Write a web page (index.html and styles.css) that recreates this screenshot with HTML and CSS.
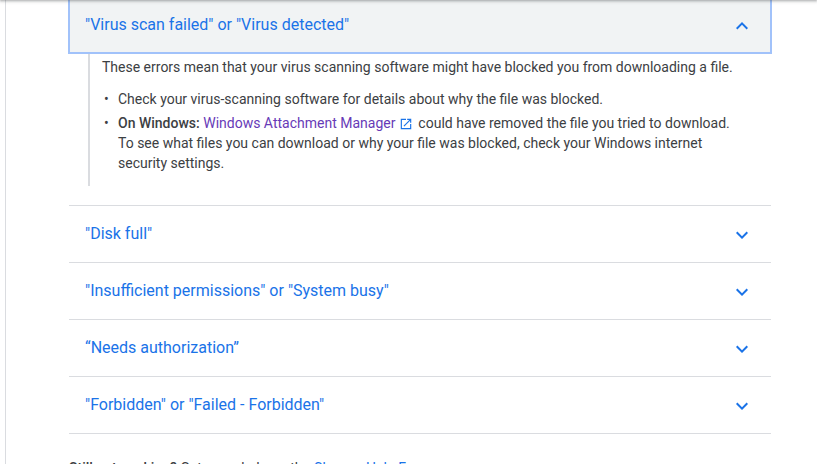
FILE: index.html
```html
<!DOCTYPE html>
<html lang="en">
<head>
    <meta charset="UTF-8">
    <meta name="viewport" content="width=device-width, initial-scale=1.0">
    <title>Fix file download errors</title>
    <link rel="stylesheet" href="styles.css">
</head>
<body>
    <header class="top-bar"></header>

    <main class="article">
        <section class="item">
            <button class="item-toggle open" type="button" aria-expanded="true" aria-controls="virus">
                <span>"Virus scan failed" or "Virus detected"</span>
                <svg class="chevron" viewBox="0 0 24 24" aria-hidden="true"><path d="M12 8l-6 6 1.41 1.41L12 10.83l4.59 4.58L18 14z"/></svg>
            </button>
            <div class="item-content" id="virus">
                <p>These errors mean that your virus scanning software might have blocked you from downloading a file.</p>
                <ul>
                    <li>Check your virus-scanning software for details about why the file was blocked.</li>
                    <li><strong>On Windows:</strong> <a class="visited" href="#attachment-manager">Windows Attachment Manager <svg class="external" viewBox="0 0 24 24" aria-hidden="true"><path d="M19 19H5V5h7V3H3v18h18v-9h-2v7zM14 3v2h3.59l-9.83 9.83 1.41 1.41L19 6.41V10h2V3h-7z"/></svg></a> could have removed the file you tried to download. To see what files you can download or why your file was blocked, check your Windows internet security settings.</li>
                </ul>
            </div>
        </section>

        <section class="item">
            <button class="item-toggle" type="button" aria-expanded="false">
                <span>"Disk full"</span>
                <svg class="chevron" viewBox="0 0 24 24" aria-hidden="true"><path d="M16.59 8.59L12 13.17 7.41 8.59 6 10l6 6 6-6z"/></svg>
            </button>
        </section>

        <section class="item">
            <button class="item-toggle" type="button" aria-expanded="false">
                <span>"Insufficient permissions" or "System busy"</span>
                <svg class="chevron" viewBox="0 0 24 24" aria-hidden="true"><path d="M16.59 8.59L12 13.17 7.41 8.59 6 10l6 6 6-6z"/></svg>
            </button>
        </section>

        <section class="item">
            <button class="item-toggle" type="button" aria-expanded="false">
                <span>“Needs authorization”</span>
                <svg class="chevron" viewBox="0 0 24 24" aria-hidden="true"><path d="M16.59 8.59L12 13.17 7.41 8.59 6 10l6 6 6-6z"/></svg>
            </button>
        </section>

        <section class="item">
            <button class="item-toggle" type="button" aria-expanded="false">
                <span>"Forbidden" or "Failed - Forbidden"</span>
                <svg class="chevron" viewBox="0 0 24 24" aria-hidden="true"><path d="M16.59 8.59L12 13.17 7.41 8.59 6 10l6 6 6-6z"/></svg>
            </button>
        </section>

        <p class="more-help"><strong>Still not working?</strong> Get more help on the <a href="#forum">Chrome Help Forum</a>.</p>
    </main>
</body>
</html>
```

FILE: styles.css
```css
html {
    height: 100%;
    overflow: hidden;
}

body {
    font-family: Roboto, Arial, sans-serif;
    font-size: 14px;
    line-height: 20px;
    color: #3c4043;
    background-color: #ffffff;
    margin: 0;
}

/* Bar sits above the scrolled page, only its shadow shows */
.top-bar {
    position: fixed;
    top: -64px;
    left: 0;
    right: 0;
    height: 64px;
    box-shadow: 0 1px 2px rgba(60, 64, 67, 0.3), 0 1px 3px 1px rgba(60, 64, 67, 0.15);
    z-index: 10;
}

.article {
    margin: -3px 0 0 5px;
    padding: 0 46px 0 63px;
    border-left: 1px solid #dadce0;
}

p {
    margin: 0;
}

strong {
    font-weight: 500;
}

a {
    color: #1a73e8;
    text-decoration: none;
}

a:hover {
    text-decoration: underline;
}

a.visited {
    color: #673ab7;
}

.item {
    border-bottom: 1px solid #dadce0;
}

.item-toggle {
    display: flex;
    justify-content: space-between;
    align-items: center;
    width: 100%;
    height: 56px;
    padding: 0 17px 0 16px;
    border: none;
    background: none;
    color: #1a73e8;
    font-family: inherit;
    font-size: 16px;
    line-height: 24px;
    text-align: left;
    cursor: pointer;
}

.item-toggle.open {
    background-color: #f1f3f4;
    outline: 2px solid #a1c2fa;
    outline-offset: -1px;
}

.chevron {
    width: 24px;
    height: 24px;
    margin-top: 2px;
    fill: #1a73e8;
}

.item-content {
    margin: 0 0 19px 19px;
    padding: 4px 0 13px 12px;
    border-left: 2px solid #dadce0;
}

.item-content ul {
    list-style: none;
    margin: 12px 0 0;
    padding: 0 30px 0 16px;
}

.item-content li + li {
    margin-top: 4px;
}

.item-content li::before {
    content: "•";
    display: inline-block;
    width: 14px;
    margin-left: -14px;
}

.external {
    width: 14px;
    height: 14px;
    margin-right: 2px;
    vertical-align: -3px;
    fill: #1a73e8;
}

.more-help {
    padding: 24px 0 16px;
}
```
